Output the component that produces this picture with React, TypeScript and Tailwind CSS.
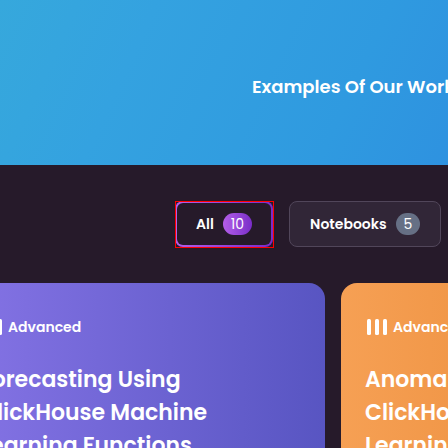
const filters = [
  { label: "All", count: 10, active: true },
  { label: "Notebooks", count: 5, active: false },
];

const cards = [
  {
    level: "Advanced",
    title: "Forecasting Using ClickHouse Machine Learning Functions",
    tone: "from-[#8674e6] to-[#5855c2]",
  },
  {
    level: "Advanced",
    title: "Anomaly Detection Using ClickHouse Machine Learning Functions",
    tone: "from-[#f6a054] to-[#e5832a]",
  },
];

function LevelIcon() {
  return (
    <svg width="24" height="16" viewBox="0 0 24 16" fill="currentColor" aria-hidden="true">
      <rect x="2" y="0" width="4" height="16" rx="1.5" />
      <rect x="10" y="0" width="4" height="16" rx="1.5" />
      <rect x="18" y="0" width="4" height="16" rx="1.5" />
    </svg>
  );
}

function FilterButton({ label, count, active }: { label: string; count: number; active: boolean }) {
  const look = active
    ? "border-2 border-transparent px-[19px] [background:linear-gradient(#261a2a,#261a2a)_padding-box,linear-gradient(90deg,#b45ee8,#7a2cc8)_border-box]"
    : "border border-[#51465a] bg-[#312637] px-5";
  return (
    <div className="relative shrink-0">
      <button
        type="button"
        aria-pressed={active}
        className={`flex h-[46px] items-center gap-[9px] rounded-lg text-[14px] font-semibold text-white ${look}`}
      >
        {label}
        <span
          className={`flex h-[22px] items-center rounded-full px-2 text-[14px] font-normal ${
            active ? "bg-linear-to-r from-[#b45ee8] to-[#7a2cc8]" : "bg-[#667085]"
          }`}
        >
          {count}
        </span>
      </button>
      {active && (
        <span className="pointer-events-none absolute top-0 left-0 -right-px -bottom-px border border-[#ff0000]" />
      )}
    </div>
  );
}

function Card({ level, title, tone }: { level: string; title: string; tone: string }) {
  return (
    <article className={`w-[369px] shrink-0 rounded-2xl bg-linear-to-r px-6 pt-8 pb-8 ${tone}`}>
      <p className="flex items-center gap-1 text-[14px] leading-6 font-semibold">
        <LevelIcon />
        {level}
      </p>
      <h2 className="mt-6 text-[22px] leading-[33px] font-semibold">{title}</h2>
    </article>
  );
}

export default function App() {
  return (
    <div className="h-screen overflow-hidden bg-[#261a2a] font-[Poppins,Inter,sans-serif] text-white">
      <header className="flex h-[165px] items-center overflow-hidden bg-[linear-gradient(115deg,#36a8dc_0%,#34a2e0_30%,#2f9ae0_75%,#2e92e0_100%)] pt-2 pl-[252px]">
        <h1 className="text-[18px] leading-8 font-semibold whitespace-nowrap">Examples Of Our Work</h1>
      </header>
      <main>
        <nav className="flex gap-4 py-9 pl-[175px]">
          {filters.map((filter) => (
            <FilterButton key={filter.label} {...filter} />
          ))}
        </nav>
        <section className="-ml-[44px] flex items-start gap-4">
          {cards.map((card) => (
            <Card key={card.title} {...card} />
          ))}
        </section>
      </main>
    </div>
  );
}
